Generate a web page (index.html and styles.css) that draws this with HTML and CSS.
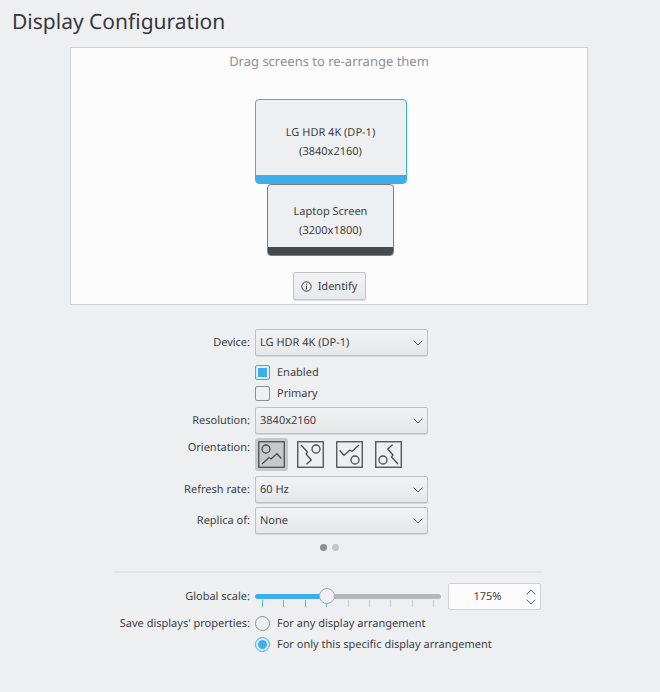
FILE: index.html
```html
<!DOCTYPE html>
<html lang="en">
<head>
    <meta charset="UTF-8">
    <meta name="viewport" content="width=device-width, initial-scale=1.0">
    <title>Display Configuration</title>
    <link rel="stylesheet" href="styles.css">
</head>
<body>
    <h1 class="page-title">Display Configuration</h1>

    <section class="arrangement">
        <p class="hint">Drag screens to re-arrange them</p>
        <div class="screens">
            <div class="screen screen-external selected">
                <span>LG HDR 4K (DP-1)</span>
                <span>(3840x2160)</span>
            </div>
            <div class="screen screen-laptop">
                <span>Laptop Screen</span>
                <span>(3200x1800)</span>
            </div>
        </div>
        <button type="button" class="identify">
            <svg width="11" height="11" viewBox="0 0 11 11" fill="none" stroke="currentColor">
                <circle cx="5.5" cy="5.5" r="4.7"/>
                <path d="M5.5 4.6V8.4M5.5 2.6V3.7"/>
            </svg>
            Identify
        </button>
    </section>

    <form class="settings">
        <label class="label" for="device">Device:</label>
        <div class="select-box">
            <select id="device">
                <option>LG HDR 4K (DP-1)</option>
                <option>Laptop Screen</option>
            </select>
            <svg class="chevron" viewBox="0 0 10 6"><path d="M0.7 0.7L5 5L9.3 0.7"/></svg>
        </div>

        <div class="checks">
            <label class="option"><input type="checkbox" checked> Enabled</label>
            <label class="option"><input type="checkbox"> Primary</label>
        </div>

        <label class="label" for="resolution">Resolution:</label>
        <div class="select-box">
            <select id="resolution">
                <option>3840x2160</option>
            </select>
            <svg class="chevron" viewBox="0 0 10 6"><path d="M0.7 0.7L5 5L9.3 0.7"/></svg>
        </div>

        <span class="label label-top" id="orientation-label">Orientation:</span>
        <div class="orientation" role="group" aria-labelledby="orientation-label">
            <button type="button" class="active" aria-label="No rotation" aria-pressed="true">
                <svg viewBox="0 0 27 27">
                    <rect x="0.75" y="0.75" width="25.5" height="25.5"/>
                    <circle cx="8" cy="8" r="4"/>
                    <path d="M4 23L11 16.5L13 18L19 12.7L23.3 17.5"/>
                </svg>
            </button>
            <button type="button" aria-label="90 degrees clockwise" aria-pressed="false">
                <svg viewBox="0 0 27 27">
                    <rect x="0.75" y="0.75" width="25.5" height="25.5"/>
                    <g transform="rotate(90 13.5 13.5)">
                        <circle cx="8" cy="8" r="4"/>
                        <path d="M4 23L11 16.5L13 18L19 12.7L23.3 17.5"/>
                    </g>
                </svg>
            </button>
            <button type="button" aria-label="Upside down" aria-pressed="false">
                <svg viewBox="0 0 27 27">
                    <rect x="0.75" y="0.75" width="25.5" height="25.5"/>
                    <g transform="rotate(180 13.5 13.5)">
                        <circle cx="8" cy="8" r="4"/>
                        <path d="M4 23L11 16.5L13 18L19 12.7L23.3 17.5"/>
                    </g>
                </svg>
            </button>
            <button type="button" aria-label="90 degrees counterclockwise" aria-pressed="false">
                <svg viewBox="0 0 27 27">
                    <rect x="0.75" y="0.75" width="25.5" height="25.5"/>
                    <g transform="rotate(270 13.5 13.5)">
                        <circle cx="8" cy="8" r="4"/>
                        <path d="M4 23L11 16.5L13 18L19 12.7L23.3 17.5"/>
                    </g>
                </svg>
            </button>
        </div>

        <label class="label" for="refresh">Refresh rate:</label>
        <div class="select-box">
            <select id="refresh">
                <option>60 Hz</option>
            </select>
            <svg class="chevron" viewBox="0 0 10 6"><path d="M0.7 0.7L5 5L9.3 0.7"/></svg>
        </div>

        <label class="label" for="replica">Replica of:</label>
        <div class="select-box">
            <select id="replica">
                <option>None</option>
            </select>
            <svg class="chevron" viewBox="0 0 10 6"><path d="M0.7 0.7L5 5L9.3 0.7"/></svg>
        </div>

        <div class="pages">
            <span class="dot current"></span>
            <span class="dot"></span>
        </div>

        <hr class="divider">

        <label class="label" for="scale">Global scale:</label>
        <div class="scale">
            <div class="slider">
                <input type="range" id="scale" min="100" max="300" step="25" value="175">
                <div class="ticks">
                    <i class="on"></i><i class="on"></i><i class="on"></i><i class="on"></i><i></i><i></i><i></i><i></i><i></i>
                </div>
            </div>
            <div class="spinbox">
                <input type="text" value="175%" aria-label="Global scale value">
                <div class="steps">
                    <button type="button" aria-label="Increase"><svg class="chevron" viewBox="0 0 10 6"><path d="M0.7 5.3L5 1L9.3 5.3"/></svg></button>
                    <button type="button" aria-label="Decrease"><svg class="chevron" viewBox="0 0 10 6"><path d="M0.7 0.7L5 5L9.3 0.7"/></svg></button>
                </div>
            </div>
        </div>

        <span class="label label-top" id="save-label">Save displays' properties:</span>
        <div class="radios" role="radiogroup" aria-labelledby="save-label">
            <label class="option"><input type="radio" name="save"> For any display arrangement</label>
            <label class="option"><input type="radio" name="save" checked> For only this specific display arrangement</label>
        </div>
    </form>
</body>
</html>
```

FILE: styles.css
```css
* {
    margin: 0;
    padding: 0;
    box-sizing: border-box;
}

body {
    background-color: #eeeff1;
    color: #3b3f43;
    font-family: "Noto Sans", sans-serif;
    font-size: 11px;
    line-height: 19px;
    text-rendering: geometricPrecision;
}

button, input, select {
    font: inherit;
    color: inherit;
    text-rendering: inherit;
}

.page-title {
    padding: 6px 12px 9px;
    font-size: 21px;
    font-weight: 400;
    line-height: 32px;
    color: #36393d;
}

/* screen arrangement */
.arrangement {
    display: flex;
    flex-direction: column;
    align-items: center;
    margin: 0 72px 0 70px;
    padding: 3px 4px 4px;
    background-color: #fcfcfc;
    border: 1px solid #cfd1d3;
}

.hint {
    font-size: 13px;
    line-height: 20px;
    color: #8d9093;
}

.screens {
    display: flex;
    flex-direction: column;
    align-items: center;
    padding: 28px 0 16px 3px;
}

.screen {
    position: relative;
    display: flex;
    flex-direction: column;
    align-items: center;
    justify-content: center;
    padding-top: 1px;
    line-height: 19px;
    background-color: #eeeff1;
    border: 1px solid #7a7c7f;
    border-radius: 4px;
    overflow: hidden;
}

.screen::after {
    content: "";
    position: absolute;
    left: 0;
    right: 0;
    bottom: 0;
    height: 8px;
    background-color: #474a4c;
}

.screen-external {
    width: 152px;
    height: 85px;
}

.screen-laptop {
    width: 127px;
    height: 72px;
}

.screen.selected {
    border-color: #3daee9;
}

.screen.selected::after {
    background-color: #3daee9;
}

.identify {
    display: flex;
    align-items: center;
    justify-content: center;
    gap: 6px;
    min-width: 73px;
    height: 28px;
    padding: 1px 6px 0;
    background: linear-gradient(#f1f2f3, #e8e9ea);
    border: 1px solid #c2c4c6;
    border-radius: 2px;
    box-shadow: 0 1px 0 #dcdddf;
}

/* form */
.settings {
    display: grid;
    grid-template-columns: minmax(135px, max-content) max-content;
    justify-content: center;
    gap: 4px 5px;
    margin: 0 74px 0 70px;
    padding: 24px 0;
}

.label {
    align-self: center;
    justify-self: end;
}

.label-top {
    align-self: start;
}

.select-box {
    position: relative;
    width: 173px;
}

.select-box select {
    display: block;
    width: 100%;
    height: 27px;
    padding: 0 24px 0 4px;
    appearance: none;
    background: linear-gradient(#f1f2f3, #e6e7e9);
    border: 1px solid #bec0c2;
    border-radius: 2px;
    box-shadow: 0 1px 0 #d6d8da;
}

.chevron {
    display: block;
    width: 10px;
    height: 6px;
    fill: none;
    stroke: #5a5d60;
}

.select-box .chevron {
    position: absolute;
    right: 5px;
    top: 11px;
    pointer-events: none;
}

.checks,
.radios {
    grid-column: 2;
    display: flex;
    flex-direction: column;
    align-items: flex-start;
    gap: 2px;
}

.checks {
    padding-top: 3px;
}

.option {
    display: flex;
    align-items: center;
    gap: 7px;
}

.option input {
    width: 15px;
    height: 15px;
    appearance: none;
    border: 1px solid #8e9194;
    border-radius: 2px;
}

.option input[type="radio"] {
    border-radius: 50%;
}

.option input:checked {
    padding: 2px;
    border-color: #3daee9;
    background-color: #3daee9;
    background-clip: content-box;
    box-shadow: inset 0 0 0 1px #d5ebf7;
}

.orientation {
    display: flex;
    gap: 6px;
    padding-bottom: 1px;
}

.orientation button {
    width: 33px;
    height: 33px;
    padding: 3px;
    background: none;
    border: none;
    border-radius: 3px;
}

.orientation button.active {
    background-color: #c6c8c9;
}

.orientation svg {
    display: block;
    width: 27px;
    height: 27px;
    fill: none;
    stroke: #4a4d50;
    stroke-width: 1.3;
}

.pages {
    grid-column: 1 / -1;
    display: flex;
    justify-content: center;
    gap: 5px;
    padding: 6px 0 16px 2px;
}

.dot {
    width: 7px;
    height: 7px;
    border-radius: 50%;
    background-color: #c3c5c7;
}

.dot.current {
    background-color: #8c9094;
}

.divider {
    grid-column: 1 / -1;
    height: 2px;
    margin-bottom: 6px;
    border: none;
    background-color: #e1e3e5;
}

.scale {
    display: flex;
    gap: 7px;
}

.slider {
    width: 186px;
    padding-top: 5px;
}

.slider input {
    position: relative;
    display: block;
    width: 100%;
    height: 16px;
    appearance: none;
    background: none;
}

.slider input::-webkit-slider-runnable-track {
    height: 5px;
    border-radius: 3px;
    background: linear-gradient(to right, #3daee9 38%, #b5b7b9 38%);
}

.slider input::-webkit-slider-thumb {
    width: 16px;
    height: 16px;
    margin-top: -6px;
    appearance: none;
    background-color: #eff0f1;
    border: 1px solid #a5a8aa;
    border-radius: 50%;
}

.ticks {
    display: flex;
    justify-content: space-between;
    margin-top: -4px;
    padding: 0 7px;
}

.ticks i {
    width: 1px;
    height: 7px;
    background-color: #c8cacc;
}

.ticks i.on {
    background-color: #5ab8ea;
}

.spinbox {
    display: flex;
    width: 93px;
    height: 27px;
    background-color: #fcfcfc;
    border: 1px solid #cfd1d3;
    border-radius: 2px;
}

.spinbox input {
    flex: 1;
    min-width: 0;
    padding-left: 4px;
    text-align: center;
    background: none;
    border: none;
}

.steps {
    display: flex;
    flex-direction: column;
    justify-content: center;
    gap: 4px;
    width: 18px;
    padding-left: 4px;
}

.steps button {
    background: none;
    border: none;
}
```
